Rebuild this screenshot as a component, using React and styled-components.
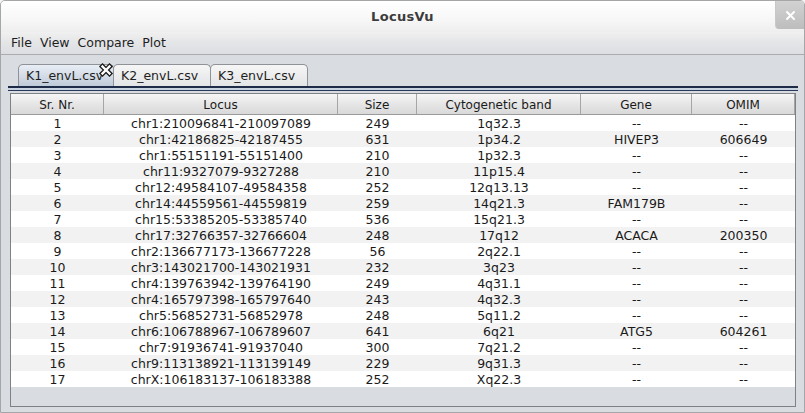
import React from "react";
import styled, { createGlobalStyle } from "styled-components";

const Global = createGlobalStyle`
  html, body { margin: 0; padding: 0; background: #f4f4f4; }
  body { font-family: "DejaVu Sans", "Liberation Sans", sans-serif; }
  * { box-sizing: border-box; }
`;

const rows = [
  [1, "chr1:210096841-210097089", 249, "1q32.3", "--", "--"],
  [2, "chr1:42186825-42187455", 631, "1p34.2", "HIVEP3", "606649"],
  [3, "chr1:55151191-55151400", 210, "1p32.3", "--", "--"],
  [4, "chr11:9327079-9327288", 210, "11p15.4", "--", "--"],
  [5, "chr12:49584107-49584358", 252, "12q13.13", "--", "--"],
  [6, "chr14:44559561-44559819", 259, "14q21.3", "FAM179B", "--"],
  [7, "chr15:53385205-53385740", 536, "15q21.3", "--", "--"],
  [8, "chr17:32766357-32766604", 248, "17q12", "ACACA", "200350"],
  [9, "chr2:136677173-136677228", 56, "2q22.1", "--", "--"],
  [10, "chr3:143021700-143021931", 232, "3q23", "--", "--"],
  [11, "chr4:139763942-139764190", 249, "4q31.1", "--", "--"],
  [12, "chr4:165797398-165797640", 243, "4q32.3", "--", "--"],
  [13, "chr5:56852731-56852978", 248, "5q11.2", "--", "--"],
  [14, "chr6:106788967-106789607", 641, "6q21", "ATG5", "604261"],
  [15, "chr7:91936741-91937040", 300, "7q21.2", "--", "--"],
  [16, "chr9:113138921-113139149", 229, "9q31.3", "--", "--"],
  [17, "chrX:106183137-106183388", 252, "Xq22.3", "--", "--"],
];

const headers = ["Sr. Nr.", "Locus", "Size", "Cytogenetic band", "Gene", "OMIM"];
const cols = "93px 234px 79px 164px 111px 1fr";

const Window = styled.div`
  width: 805px;
  height: 413px;
  display: flex;
  flex-direction: column;
  border: 1px solid #a4a6a8;
  border-radius: 5px 5px 0 0;
  overflow: hidden;
  background: #d9dce1;
`;

const TitleBar = styled.div`
  height: 31px;
  flex: none;
  display: flex;
  align-items: center;
  justify-content: center;
  position: relative;
  background: linear-gradient(#ffffff, #f7f7f7 60%, #eeeeee);
  font-weight: bold;
  font-size: 13px;
  color: #3c3c3c;
  letter-spacing: 0.3px;
`;

const CloseBtn = styled.div`
  position: absolute;
  right: 0;
  top: 0;
  width: 29px;
  height: 28px;
  border-radius: 0 0 0 4px;
  background: linear-gradient(#d2d2d2, #bdbdbd);
  border-left: 1px solid #c8c8c8;
  display: flex;
  align-items: center;
  justify-content: center;
`;

const MenuBar = styled.div`
  height: 23px;
  flex: none;
  display: flex;
  align-items: center;
  gap: 8px;
  padding: 0 0 1px 10px;
  background: linear-gradient(#f0f0f0, #e4e5e7 50%, #dcdee2);
  border-bottom: 1px solid #a9abad;
`;

const MenuItem = styled.span`
  font-size: 12.5px;
  color: #1e1e1e;
`;

const Content = styled.div`
  flex: 1;
  display: flex;
  flex-direction: column;
  padding: 9px 6px 5px 6px;
  background: #d9dce1;
`;

const TabStrip = styled.div`
  display: flex;
  padding-left: 11px;
  height: 22px;
`;

const Tab = styled.div`
  width: ${(p) => p.$w}px;
  height: 22px;
  border: 1px solid #8f9296;
  border-bottom: none;
  border-radius: 5px 5px 0 0;
  margin-right: -1px;
  background: ${(p) =>
    p.$active ? "linear-gradient(#e9eef5, #bfcad8)" : "linear-gradient(#f6f6f6, #e3e4e6)"};
  display: flex;
  align-items: center;
  padding-left: 7px;
  font-size: 12.5px;
  color: #1e1e1e;
  position: relative;
  z-index: ${(p) => (p.$active ? 1 : 0)};
`;

const TabClose = styled.svg`
  position: absolute;
  right: 0px;
  top: -2px;
  overflow: visible;
`;

const TabLine = styled.div`
  height: 5px;
  border-top: 2px solid #1d2b48;
  border-bottom: 1px solid #2a3a5c;
  background: #c9d2df;
  margin: 0 0 0 1px;
`;

const TableBox = styled.div`
  flex: 1;
  margin: 2px 2px 0 3px;
  border: 1px solid #7f8285;
  display: flex;
  flex-direction: column;
  background: #d9dce1;
`;

const Row = styled.div`
  display: grid;
  grid-template-columns: ${cols};
  height: ${(p) => (p.$head ? 21 : 16)}px;
  background: ${(p) =>
    p.$head ? "linear-gradient(#f7f7f7, #e6e6e6 50%, #d9d9d9)" : p.$odd ? "#f2f2f2" : "#ffffff"};
  ${(p) => p.$head && "border-bottom: 1px solid #9a9a9a;"}
`;

const Cell = styled.div`
  display: flex;
  align-items: center;
  justify-content: center;
  font-size: ${(p) => (p.$head ? 12 : 12.5)}px;
  color: #1a1a1a;
  white-space: nowrap;
  overflow: hidden;
  ${(p) => p.$head && "border-right: 1px solid #a6a6a6; padding-top: 1px;"}
`;

export default function App() {
  return (
    <>
      <Global />
      <Window>
        <TitleBar>
          LocusVu
          <CloseBtn>
            <svg width="11" height="11" viewBox="0 0 11 11">
              <path d="M2 2 L9 9 M9 2 L2 9" stroke="#ffffff" strokeWidth="2" strokeLinecap="round" />
            </svg>
          </CloseBtn>
        </TitleBar>
        <MenuBar>
          <MenuItem>File</MenuItem>
          <MenuItem>View</MenuItem>
          <MenuItem>Compare</MenuItem>
          <MenuItem>Plot</MenuItem>
        </MenuBar>
        <Content>
          <TabStrip>
            <Tab $active $w={96}>
              K1_envL.csv
              <TabClose width="14" height="14" viewBox="0 0 14 14">
                <path d="M3.5 3.5 L10.5 10.5 M10.5 3.5 L3.5 10.5" stroke="#1a1a1a" strokeWidth="5" strokeLinecap="square" />
                <path d="M3.5 3.5 L10.5 10.5 M10.5 3.5 L3.5 10.5" stroke="#ffffff" strokeWidth="2.4" strokeLinecap="square" />
              </TabClose>
            </Tab>
            <Tab $w={98}>K2_envL.csv</Tab>
            <Tab $w={98}>K3_envL.csv</Tab>
          </TabStrip>
          <TabLine />
          <TableBox>
            <Row $head>
              {headers.map((h) => (
                <Cell $head key={h}>{h}</Cell>
              ))}
            </Row>
            {rows.map((r, i) => (
              <Row key={r[0]} $odd={i % 2 === 1}>
                {r.map((v, j) => (
                  <Cell key={j}>{v}</Cell>
                ))}
              </Row>
            ))}
          </TableBox>
        </Content>
      </Window>
    </>
  );
}
